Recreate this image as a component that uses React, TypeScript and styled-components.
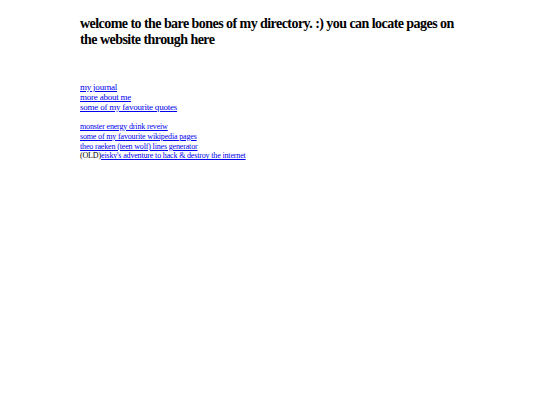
import { createGlobalStyle } from "styled-components";
import styled from "styled-components";

const Global = createGlobalStyle`
  body {
    margin: 0;
    background: #ffffff;
    font-family: "Liberation Serif", "Times New Roman", serif;
    color: #000000;
  }
`;

const Page = styled.main`
  padding: 16px 80px 0;
`;

const Title = styled.h2`
  margin: 0;
  width: 380px;
  font-size: 14px;
  line-height: 16px;
  letter-spacing: -0.55px;
  font-weight: bold;
`;

type ListProps = {
  $size: number;
  $line: number;
  $track: number;
};

const LinkList = styled.ul<ListProps>`
  list-style: none;
  margin: 0;
  padding: 0;
  font-size: ${(p) => p.$size}px;
  line-height: ${(p) => p.$line}px;
  letter-spacing: ${(p) => p.$track}px;
`;

const Main = styled(LinkList)`
  margin-top: 34px;
`;

const Extra = styled(LinkList)`
  margin-top: 10px;
`;

const Link = styled.a`
  color: #0000ee;
  text-decoration: underline;
`;

const main = ["my journal", "more about me", "some of my favourite quotes"];

const extra = [
  "monster energy drink reveiw",
  "some of my favourite wikipedia pages",
  "theo raeken (teen wolf) lines generator",
];

export default function App() {
  return (
    <>
      <Global />
      <Page>
        <Title>
          welcome to the bare bones of my directory. :) you can locate pages on
          the website through here
        </Title>
        <Main $size={9} $line={10} $track={-0.22}>
          {main.map((t) => (
            <li key={t}>
              <Link href="#">{t}</Link>
            </li>
          ))}
        </Main>
        <Extra $size={8} $line={9.8} $track={-0.16}>
          {extra.map((t) => (
            <li key={t}>
              <Link href="#">{t}</Link>
            </li>
          ))}
          <li>
            (OLD)<Link href="#">eisky's adventure to hack &amp; destroy the internet</Link>
          </li>
        </Extra>
      </Page>
    </>
  );
}
